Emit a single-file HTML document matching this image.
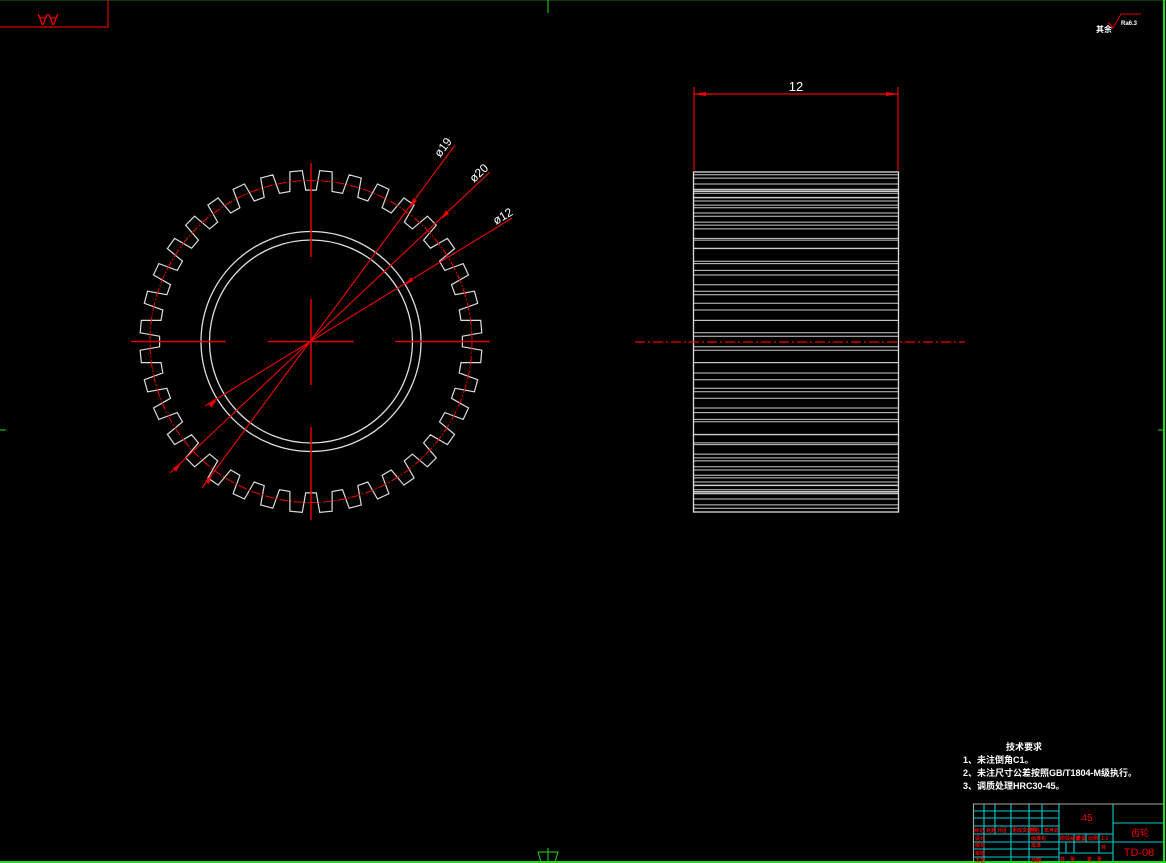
<!DOCTYPE html>
<html><head><meta charset="utf-8"><style>
html,body{margin:0;padding:0;background:#000;width:1166px;height:863px;overflow:hidden}
svg{display:block}
text{font-family:"Liberation Sans","Noto Sans CJK SC",sans-serif}
</style></head><body>
<svg id="s" width="1166" height="863" viewBox="0 0 1166 863" xmlns="http://www.w3.org/2000/svg">
<rect width="1166" height="863" fill="#000"/>
<line x1="0" y1="0.5" x2="1166" y2="0.5" stroke="#0a3a0a" stroke-width="1"/>
<line x1="1164" y1="0" x2="1164" y2="863" stroke="#1fdc1f" stroke-width="2"/>
<line x1="0" y1="862" x2="1166" y2="862" stroke="#1fdc1f" stroke-width="2"/>
<line x1="548" y1="0" x2="548" y2="13" stroke="#1fdc1f"/>
<line x1="0" y1="430" x2="6" y2="430" stroke="#1fdc1f"/>
<line x1="1158" y1="430" x2="1164" y2="430" stroke="#1fdc1f"/>
<path d="M538 852 L558 852 L555 862 M541 862 L538 852 M548 848 L548 862" stroke="#1fdc1f" fill="none"/>
<path d="M0 27 L108 27 L108 0" stroke="#d00" fill="none" stroke-width="1.2"/>
<text x="48" y="10" fill="#e00" font-size="16" text-anchor="middle" transform="rotate(180 48 12)">AA</text>
<text x="1096" y="32" fill="#fff" font-size="8" font-weight="bold">其余</text>
<path d="M1108 22 L1113 28 L1121 14 L1141 14" stroke="#d00" fill="none"/>
<text x="1121" y="25" fill="#fff" font-size="6" font-weight="bold">Ra6.3</text>
<g id="gear"></g>
<circle cx="311" cy="341.5" r="110" stroke="#ddd" fill="none" stroke-width="1.3"/>
<circle cx="311" cy="341.5" r="101.5" stroke="#ddd" fill="none" stroke-width="1.3"/>
<circle cx="311" cy="341.5" r="161" stroke="#e00" fill="none" stroke-dasharray="9 2 1.5 2"/>
<g stroke="#d00" stroke-width="1.5">
<line x1="131" y1="341.5" x2="226" y2="341.5"/>
<line x1="268" y1="341.5" x2="354" y2="341.5"/>
<line x1="395" y1="341.5" x2="490" y2="341.5"/>
<line x1="311" y1="163" x2="311" y2="257"/>
<line x1="311" y1="299" x2="311" y2="385"/>
<line x1="311" y1="427" x2="311" y2="520"/>
</g>
<g stroke="#e00" stroke-width="1.1">
<line x1="202" y1="488" x2="455" y2="145"/>
<line x1="170" y1="473" x2="490" y2="172"/>
<line x1="205" y1="406" x2="512" y2="218"/>
</g>
<g fill="#e00">
<polygon points="410,208 413,198 417,201"/>
<polygon points="212,474 209,484 205,481"/>
<polygon points="441,219 446,210 449,214"/>
<polygon points="181,463 176,472 173,468"/>
<polygon points="405,285 411,277 413,281"/>
<polygon points="217,400 211,408 209,404"/>
</g>
<text x="0" y="0" fill="#fff" font-size="12" transform="translate(440,158) rotate(-53)">ø19</text>
<text x="0" y="0" fill="#fff" font-size="12" transform="translate(474,183) rotate(-43)">ø20</text>
<text x="0" y="0" fill="#fff" font-size="12" transform="translate(496,225) rotate(-31)">ø12</text>
<g id="side"></g>
<rect x="693.5" y="172" width="205" height="340" stroke="#ddd" fill="none" stroke-width="1.3"/>
<line x1="635" y1="342" x2="965" y2="342" stroke="#e00" stroke-dasharray="10 3 2 3" stroke-width="1.2"/>
<g stroke="#e00" stroke-width="1.2">
<line x1="694" y1="87" x2="694" y2="170"/>
<line x1="898" y1="87" x2="898" y2="170"/>
<line x1="694" y1="94" x2="898" y2="94"/>
</g>
<polygon points="694,94 706,92 706,96" fill="#e00"/>
<polygon points="898,94 886,92 886,96" fill="#e00"/>
<text x="796" y="91" fill="#fff" font-size="13" text-anchor="middle">12</text>
<g fill="#fff" font-size="9" font-weight="bold">
<text x="1006" y="750">技术要求</text>
<text x="963" y="763">1、未注倒角C1。</text>
<text x="963" y="776">2、未注尺寸公差按照GB/T1804-M级执行。</text>
<text x="963" y="789">3、调质处理HRC30-45。</text>
</g>
<g stroke="#0cc" stroke-width="1.1" fill="none">
<line x1="973" y1="804" x2="1164" y2="804" stroke="#aaa"/>
<line x1="973.5" y1="804" x2="973.5" y2="862" stroke="#aaa"/>
<line x1="984" y1="804" x2="984" y2="862"/>
<line x1="995" y1="804" x2="995" y2="834"/>
<line x1="1011" y1="804" x2="1011" y2="862"/>
<line x1="1029" y1="804" x2="1029" y2="862"/>
<line x1="1042" y1="804" x2="1042" y2="834"/>
<line x1="1059" y1="804" x2="1059" y2="862"/>
<line x1="1113" y1="804" x2="1113" y2="862"/>
<line x1="973" y1="811" x2="1059" y2="811"/>
<line x1="973" y1="818" x2="1059" y2="818"/>
<line x1="973" y1="826" x2="1059" y2="826"/>
<line x1="973" y1="834" x2="1113" y2="834"/>
<line x1="973" y1="842" x2="1059" y2="842"/>
<line x1="973" y1="849" x2="1059" y2="849"/>
<line x1="973" y1="857" x2="1059" y2="857"/>
<line x1="1113" y1="823" x2="1164" y2="823"/>
<line x1="1113" y1="842" x2="1164" y2="842"/>
<line x1="1059" y1="853" x2="1113" y2="853"/>
<line x1="1074" y1="834" x2="1074" y2="853"/>
<line x1="1066" y1="842" x2="1066" y2="853"/>
<line x1="1086" y1="834" x2="1086" y2="842"/>
<line x1="1099" y1="834" x2="1099" y2="853"/>
<line x1="1059" y1="842" x2="1113" y2="842"/>
</g>
<g fill="#e00" font-size="5" font-weight="bold">
<text x="974" y="832">标记</text><text x="986" y="832">处数</text><text x="997" y="832">分区</text><text x="1012" y="832">更改文件号</text><text x="1030" y="832">签名</text><text x="1044" y="832">年月日</text>
<text x="975" y="840">设计</text><text x="975" y="847">校对</text><text x="975" y="855">审核</text><text x="975" y="862">工艺</text>
<text x="1031" y="840">标准化</text><text x="1031" y="847">批准</text><text x="1031" y="862">日期</text>
<text x="1060" y="840">阶段标记</text><text x="1076" y="840">重量</text><text x="1088" y="840">比例</text><text x="1101" y="840">1:1</text>
<text x="1101" y="849">共</text>
<text x="1060" y="861">共</text><text x="1070" y="861">张</text><text x="1087" y="861">第</text><text x="1097" y="861">张</text>
</g>
<text x="1087" y="821" fill="#e00" font-size="10" text-anchor="middle">45</text>
<text x="1140" y="836" fill="#e00" font-size="9" text-anchor="middle">齿轮</text>
<text x="1139" y="856" fill="#e00" font-size="11" text-anchor="middle">TD-08</text>
</svg>
<script>
(function(){
var D=Math.PI/180,cx=311,cy=341.5,N=36,Ro=171,Rr=151.5,p=10*D,off=5*D,ht=2.1*D,hr=3.0*D;
var pts=[];
for(var i=0;i<N;i++){var a=off+i*p;
 [[Rr,a-hr],[Ro,a-ht],[Ro,a+ht],[Rr,a+hr]].forEach(function(q){pts.push((cx+q[0]*Math.cos(q[1])).toFixed(1)+","+(cy-q[0]*Math.sin(q[1])).toFixed(1));});
}
var ns="http://www.w3.org/2000/svg";
var pg=document.createElementNS(ns,"polygon");
pg.setAttribute("points",pts.join(" "));pg.setAttribute("fill","none");pg.setAttribute("stroke","#ddd");pg.setAttribute("stroke-width","1.2");
document.getElementById("gear").appendChild(pg);
var sd=document.getElementById("side");
for(var i=0;i<N;i++){var a=off+i*p;if(Math.cos(a)<0)continue;
 [[Ro,a-ht],[Ro,a+ht],[Rr,a-hr],[Rr,a+hr]].forEach(function(q){
  var y=cy-q[0]*Math.sin(q[1]);if(y<173||y>511)return;
  var l=document.createElementNS(ns,"line");
  l.setAttribute("x1",694);l.setAttribute("x2",898);l.setAttribute("y1",y.toFixed(1));l.setAttribute("y2",y.toFixed(1));
  l.setAttribute("stroke","#ccc");l.setAttribute("stroke-width","1");sd.appendChild(l);});
}
})();
</script>
</body></html>
